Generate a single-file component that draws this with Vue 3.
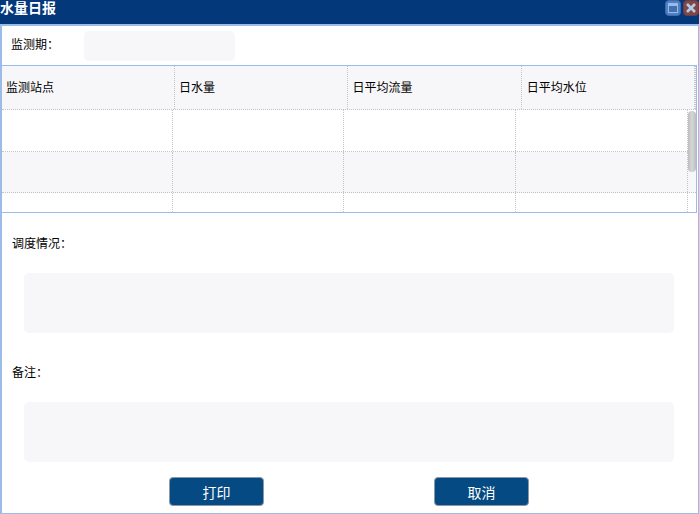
<script setup>
const heads = ['监测站点', '日水量', '日平均流量', '日平均水位']
const rows = [0, 1, 2]
</script>

<template>
  <div class="win">
    <header class="bar">
      <span class="title">水量日报</span>
      <span class="tools">
        <svg class="ico" width="16" height="16" viewBox="0 0 16 16">
          <rect x="0.5" y="0.5" width="15" height="15" rx="3.5" fill="#4d80c6" stroke="#3d6cae" />
          <rect x="3.5" y="3.5" width="9" height="9" fill="#3f70b2" stroke="#9db9e0" />
          <rect x="4" y="4" width="8" height="2" fill="#9db9e0" />
        </svg>
        <svg class="ico" width="16" height="16" viewBox="0 0 16 16">
          <rect x="0.5" y="0.5" width="15" height="15" rx="3.5" fill="#7f4646" stroke="#6a3d4c" />
          <path d="M4 4 L12 12 M12 4 L4 12" stroke="#b4cbe4" stroke-width="2.6" />
        </svg>
      </span>
    </header>
    <main class="body">
      <div class="period">
        <label class="lab">监测期：</label>
        <div class="field small"></div>
      </div>
      <section class="grid">
        <div class="thead">
          <div v-for="h in heads" :key="h" class="th">{{ h }}</div>
          <div class="th-end"></div>
        </div>
        <div class="tbody">
          <div v-for="r in rows" :key="r" class="tr" :class="{ alt: r === 1, tall: r === 0, last: r === 2 }">
            <div v-for="h in heads" :key="h" class="td"></div>
          </div>
          <div class="thumb"></div>
        </div>
      </section>
      <div class="block first">
        <label class="lab">调度情况：</label>
        <div class="field wide"></div>
      </div>
      <div class="block second">
        <label class="lab">备注：</label>
        <div class="field wide"></div>
      </div>
      <div class="actions">
        <button class="btn">打印</button>
        <button class="btn">取消</button>
      </div>
    </main>
  </div>
</template>

<style scoped>
.win {
  width: 699px;
  height: 514px;
  box-sizing: border-box;
  display: flex;
  flex-direction: column;
  overflow: hidden;
  background: #fff;
  font-family: "Liberation Sans", "Noto Sans CJK SC", sans-serif;
  font-size: 12px;
  color: #000;
}
.bar {
  height: 24px;
  flex: none;
  background: #03387a;
  display: flex;
  align-items: flex-start;
  justify-content: space-between;
}
.title {
  color: #fff;
  font-size: 14px;
  font-weight: bold;
  line-height: 16px;
}
.tools {
  display: flex;
  gap: 2px;
}
.ico { display: block; }
.body {
  flex: 1;
  min-height: 0;
  border: solid #9bbbe9;
  border-width: 2px 1px 1px 2px;
  display: flex;
  flex-direction: column;
  position: relative;
}
.period {
  height: 39px;
  flex: none;
  display: flex;
  align-items: center;
  padding-left: 9px;
}
.period .lab { width: 73px; margin-top: -2px; }
.lab { line-height: 16px; display: block; }
.field {
  background: #f7f7f9;
  border-radius: 5px;
}
.small { width: 151px; height: 30px; }
.grid {
  height: 148px;
  flex: none;
  box-sizing: border-box;
  border: 1px solid #9bbbe9;
  border-left: none;
  margin-right: 1px;
  overflow: hidden;
  display: flex;
  flex-direction: column;
}
.thead {
  height: 44px;
  flex: none;
  box-sizing: border-box;
  display: flex;
  background: #f7f7f9;
  border-bottom: 1px dotted #c4c4c4;
}
.th {
  width: 173.4px;
  flex: none;
  box-sizing: border-box;
  border-right: 1px dotted #c4c4c4;
  padding: 0 0 2px 4px;
  display: flex;
  align-items: center;
}
.th:first-child { width: 173px; }
.th:nth-child(4) { padding-left: 5px; }
.th-end { flex: 1; border-right: 1px dotted #c4c4c4; }
.tbody { flex: 1; position: relative; overflow: hidden; }
.tr {
  height: 41px;
  box-sizing: border-box;
  display: flex;
  border-bottom: 1px dotted #c4c4c4;
}
.tr.tall { height: 42px; }
.tr.alt { background: #f7f7f9; }
.tr.last { border-bottom: none; }
.td {
  width: 172px;
  flex: none;
  box-sizing: border-box;
  border-right: 1px dotted #c4c4c4;
}
.td:first-child, .td:nth-child(2) { width: 171px; }
.thumb {
  position: absolute;
  right: 0;
  top: 1px;
  width: 8px;
  height: 61px;
  border-radius: 4px;
  background: linear-gradient(to right, #bdbdbd, #d6d6d6 50%, #bdbdbd);
}
.block { flex: none; }
.first { padding: 23px 0 0 10px; }
.second { padding: 32px 0 0 10px; }
.wide { width: 650px; height: 60px; margin: 21px 0 0 12px; }
.actions {
  display: flex;
  justify-content: flex-start;
  gap: 170px;
  padding: 15px 0 0 167px;
}
.btn {
  width: 95px;
  height: 29px;
  box-sizing: border-box;
  background: #054a83;
  border: 1px solid #8c98a6;
  border-radius: 4px;
  color: #fff;
  font-family: inherit;
  font-size: 14px;
  padding: 0;
}
</style>
